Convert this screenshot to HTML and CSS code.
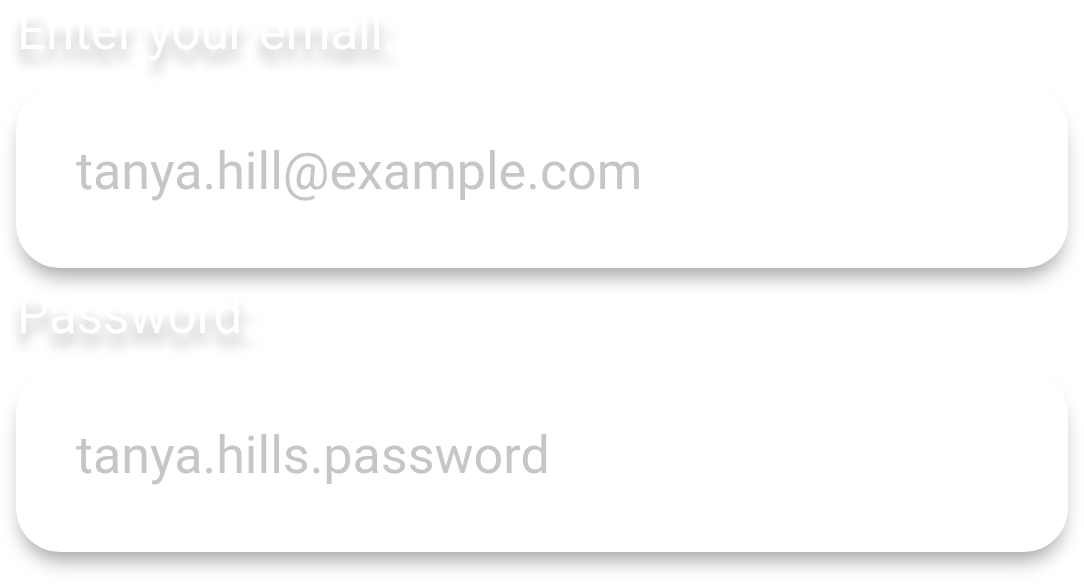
FILE: index.html
```html
<!DOCTYPE html>
<html lang="en">
<head>
<meta charset="utf-8">
<title>Sign in</title>
<link rel="stylesheet" href="styles.css">
</head>
<body>
<form class="form">
  <div class="field">
    <label class="label" for="email">Enter your email:</label>
    <input class="input" id="email" type="email" placeholder="tanya.hill@example.com">
  </div>
  <div class="field">
    <label class="label" for="password">Password:</label>
    <input class="input" id="password" type="text" placeholder="tanya.hills.password">
  </div>
</form>
</body>
</html>
```

FILE: styles.css
```css
html, body {
  margin: 0;
  padding: 0;
  background: #ffffff;
}

body {
  font-family: Roboto, "Liberation Sans", sans-serif;
}

.form {
  display: flex;
  flex-direction: column;
  gap: 25px;
  padding: 9px 16px 60px;
}

.field {
  display: flex;
  flex-direction: column;
  gap: 31px;
}

.label {
  display: block;
  padding-left: 1px;
  font-size: 51px;
  line-height: 46px;
  color: #ffffff;
  text-shadow: 0 13px 12px rgba(0, 0, 0, 0.24);
}

.input {
  box-sizing: border-box;
  width: 100%;
  height: 182px;
  padding: 0 40px 12px 60px;
  border: none;
  border-radius: 44px;
  background: #ffffff;
  box-shadow: 0 14px 20px -6px rgba(0, 0, 0, 0.36);
  font-family: Roboto, "Liberation Sans", sans-serif;
  font-size: 52px;
  color: #333333;
  outline: none;
}

.input::placeholder {
  color: #c6c6c6;
  opacity: 1;
}
```
